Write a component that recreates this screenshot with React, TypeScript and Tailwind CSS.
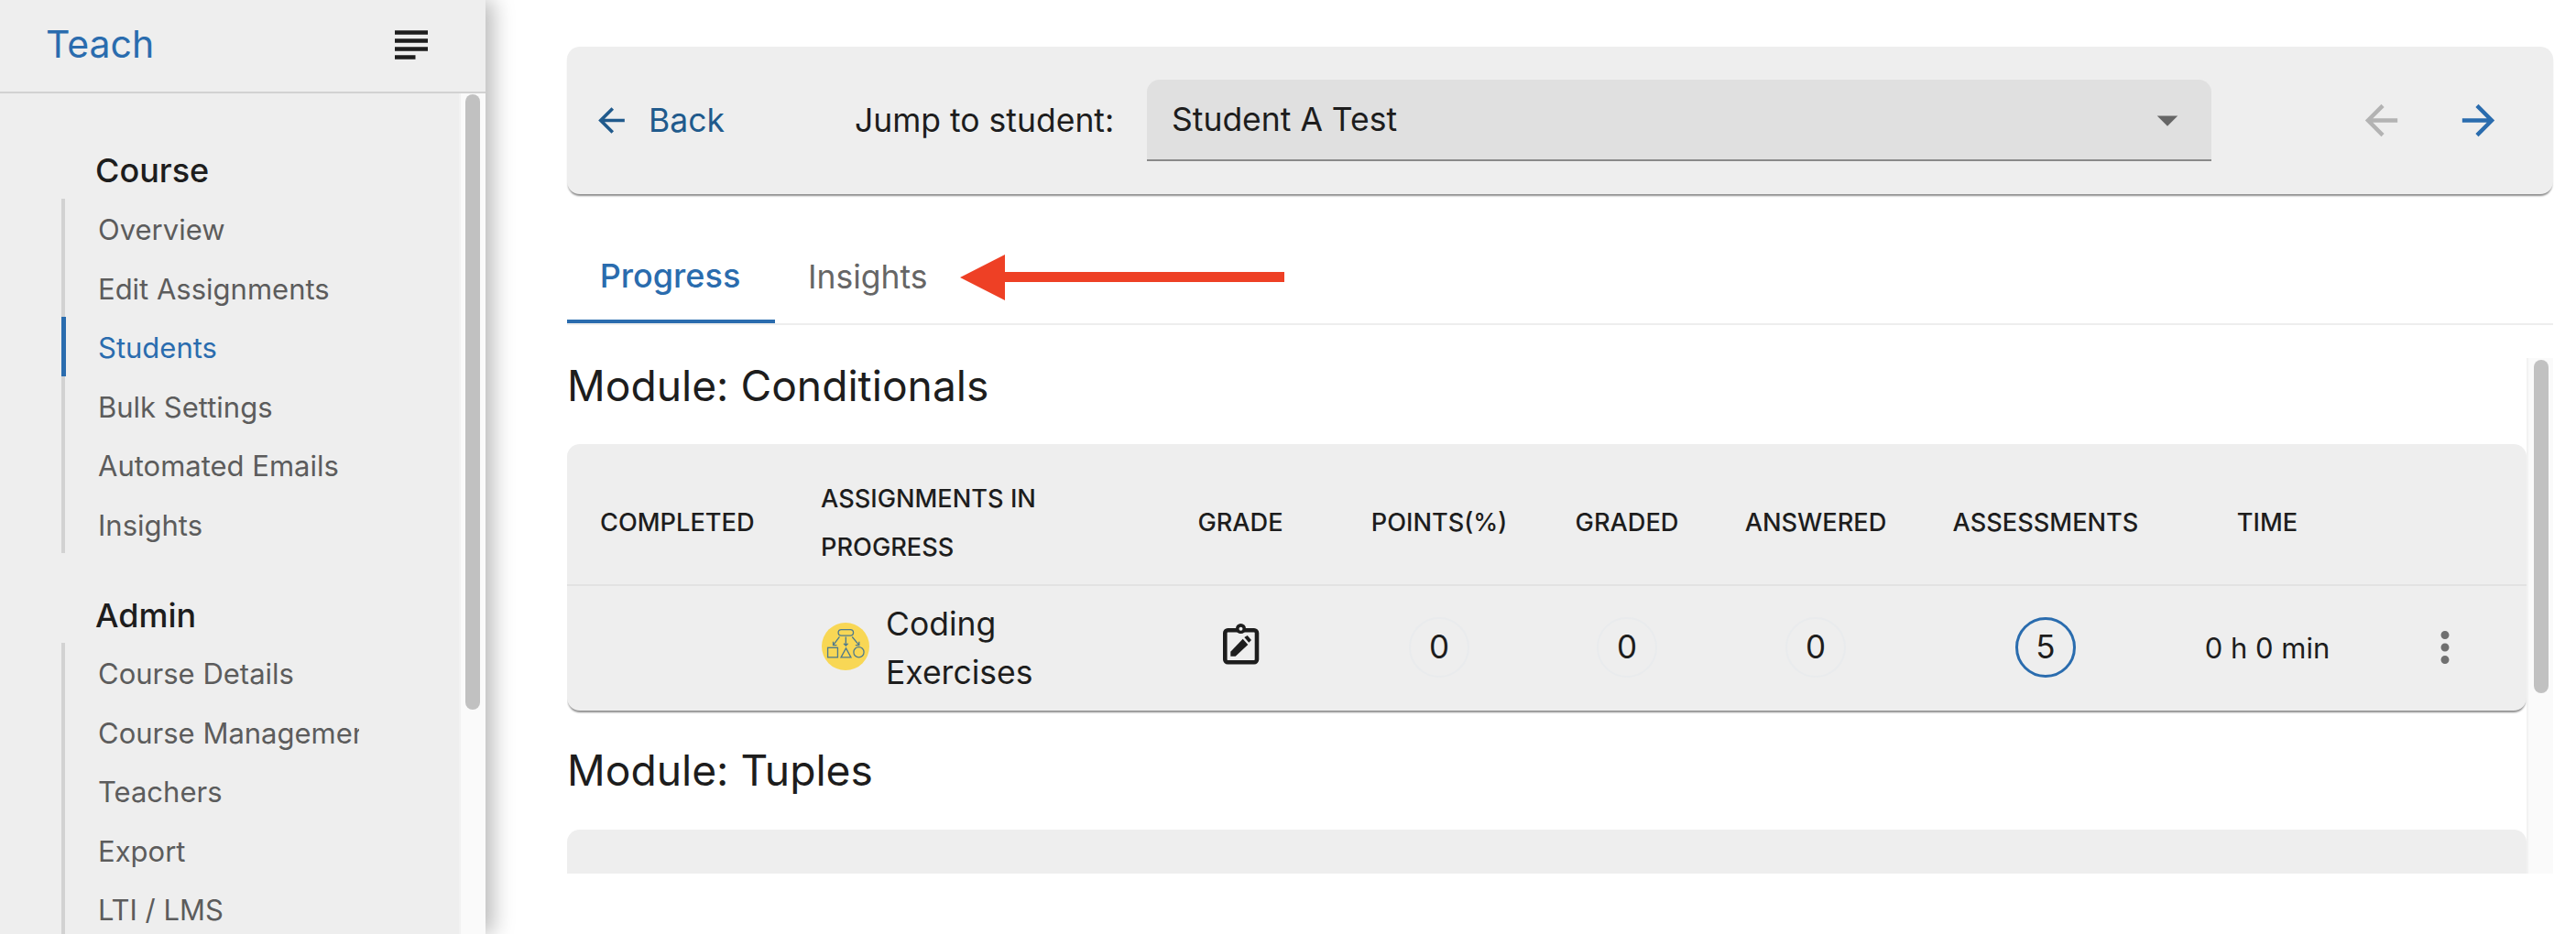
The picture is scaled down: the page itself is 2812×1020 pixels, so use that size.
const courseLinks = ["Overview", "Edit Assignments", "Students", "Bulk Settings", "Automated Emails", "Insights"];
const adminLinks = ["Course Details", "Course Management", "Teachers", "Export", "LTI / LMS"];

const Mui = ({ d, className }: { d: string; className: string }) => (
  <svg viewBox="0 0 24 24" fill="currentColor" className={className}>
    <path d={d} />
  </svg>
);

const back = "M20 11H7.83l5.59-5.59L12 4l-8 8 8 8 1.41-1.41L7.83 13H20v-2z";
const forward = "M12 4l-1.41 1.41L16.17 11H4v2h12.17l-5.58 5.59L12 20l8-8z";

const NavGroup = ({ links }: { links: string[] }) => (
  <div className="w-[325px] border-l-4 border-[#d2d2d2]">
    {links.map((link) => (
      <div
        key={link}
        className={
          link === "Students"
            ? "-ml-[4px] h-[64.5px] w-[325px] overflow-hidden whitespace-nowrap border-l-[5px] border-[#2a6cae] pl-[35px] text-[31px] leading-[67px] text-[#2a6cae]"
            : "h-[64.5px] w-[321px] overflow-hidden whitespace-nowrap pl-[36px] text-[31px] leading-[67px] text-[#5c5c5c]"
        }
      >
        {link}
      </div>
    ))}
  </div>
);

const Sidebar = () => (
  <aside className="relative z-10 flex h-[1020px] w-[530px] shrink-0 flex-col overflow-hidden bg-[#eeeeee] shadow-[8px_0_22px_rgba(0,0,0,0.28)]">
    <div className="flex h-[102px] shrink-0 items-start justify-between border-b-2 border-[#d2d2d2] pl-[50px] pr-[54px]">
      <span className="pt-[20px] text-[41px] leading-[56px] text-[#2a6cae]">Teach</span>
      <Mui d="M14 17H4v2h10v-2zm6-8H4v2h16V9zM4 15h16v-2H4v2zM4 5v2h16V5H4z" className="mt-[22px] h-[54px] w-[54px] text-[#1d1d1d]" />
    </div>
    <div className="flex min-h-0 flex-1">
      <nav className="flex-1 pl-[67px] pt-[60px]">
        <h3 className="mb-[7px] h-[48px] pl-[37px] text-[36px] font-medium leading-[48px] text-[#1d1d1d]">Course</h3>
        <NavGroup links={courseLinks} />
        <h3 className="mb-[6px] mt-[44px] h-[48px] pl-[37px] text-[36px] font-medium leading-[48px] text-[#1d1d1d]">Admin</h3>
        <NavGroup links={adminLinks} />
      </nav>
      <div className="w-[29px] shrink-0 border-l-2 border-[#f2f2f2] bg-[#fafafa] pl-[5px] pt-[1px]">
        <div className="h-[672px] w-[16px] rounded-full bg-[#c1c1c1]" />
      </div>
    </div>
  </aside>
);

const Toolbar = () => (
  <div className="flex h-[161px] items-center rounded-[14px] bg-[#eeeeee] pl-[27px] shadow-[0_3px_2px_-1px_rgba(0,0,0,0.45)]">
    <Mui d={back} className="h-[43px] w-[43px] text-[#205a8c]" />
    <span className="ml-[19px] w-[225px] text-[35.5px] text-[#205a8c]">Back</span>
    <span className="w-[319px] text-[35.5px] text-[#1d1d1d]">Jump to student:</span>
    <div className="flex h-[89px] w-[1162px] items-center justify-between rounded-t-[14px] border-b-2 border-[#8a8a8a] bg-[#e0e0e0] pl-[27px] pr-[21px]">
      <span className="text-[35.5px] text-[#1d1d1d]">Student A Test</span>
      <Mui d="M7 10l5 5 5-5z" className="h-[54px] w-[54px] text-[#666666]" />
    </div>
    <Mui d={back} className="ml-[159px] h-[53px] w-[53px] text-[#b3b3b3]" />
    <Mui d={forward} className="ml-[53px] h-[53px] w-[53px] text-[#2a6cae]" />
  </div>
);

const Tabs = () => (
  <div className="relative mt-[40px] flex h-[103px] border-b-2 border-[#eeeeee]">
    <div className="flex h-[101px] w-[227px] items-center justify-center border-b-4 border-[#2a6cae] pr-[2px] text-[36px] font-medium text-[#2a6cae]">Progress</div>
    <div className="flex h-[101px] items-center px-[36px] text-[35.5px] text-[#666666]">Insights</div>
    <svg viewBox="0 0 354 50" className="absolute left-[429px] top-[26px] h-[50px] w-[354px]">
      <path d="M0 25 L49 0 V19 H354 V30 H49 V50 Z" fill="#ee4025" />
    </svg>
  </div>
);

const colClass = "grid grid-cols-[242px_381px_224px_210px_200px_212px_290px_194px_185px]";

const Counter = ({ value, active }: { value: number; active?: boolean }) => (
  <div className="mb-[3px] flex justify-center">
    <span
      className={
        active
          ? "flex h-[66px] w-[66px] items-center justify-center rounded-full border-[3px] border-[#2a6cae] text-[35px] text-[#1d1d1d]"
          : "flex h-[66px] w-[66px] items-center justify-center rounded-full border-2 border-[#e9ebed] text-[35px] text-[#1d1d1d]"
      }
    >
      {value}
    </span>
  </div>
);

const GradeIcon = () => (
  <svg viewBox="0 0 50 50" className="mb-[10px] ml-[2px] h-[50px] w-[50px] text-[#1d1d1d]">
    <rect x="7.3" y="10.3" width="34.7" height="35" rx="3" fill="none" stroke="currentColor" strokeWidth="4.6" />
    <circle cx="24.5" cy="8.5" r="5.5" fill="currentColor" />
    <circle cx="24.5" cy="8.7" r="2" fill="#eeeeee" />
    <path d="M13.3 38.7 V33.7 L26.7 19.7 L32.3 26 L18.7 38.7 Z" fill="currentColor" />
    <path d="M28.3 18 L31.7 16 L36 21 L33.3 23.7 Z" fill="currentColor" />
  </svg>
);

const CodingIcon = () => (
  <svg viewBox="49 57 158 158" className="mb-[5px] h-[52px] w-[52px] shrink-0 rounded-full bg-[#f8d755]" fill="none" stroke="#4f7a8c" strokeWidth="4">
    <rect x="104" y="80" width="50" height="20" rx="10" />
    <path d="M108 104 L87 132 M87 120 V132 H99" />
    <path d="M129 104 V133 M122 126 L129 133 L136 126" />
    <path d="M150 104 L173 132 M173 120 V132 H161" />
    <rect x="69" y="140" width="33" height="32" />
    <path d="M113 172 H146 L129.5 142 Z" />
    <circle cx="172" cy="155" r="17" />
  </svg>
);

const ModuleTable = () => (
  <div className="h-[291px] rounded-[14px] bg-[#eeeeee] shadow-[0_3px_2px_-1px_rgba(0,0,0,0.45)]">
    <div className={`${colClass} h-[155px] items-center border-b-2 border-[#e2e2e2] pt-[18px] text-center text-[27.2px] font-medium leading-[53px] text-[#1d1d1d]`}>
      <div className="pl-[36px] text-left">COMPLETED</div>
      <div className="pl-[35px] text-left">ASSIGNMENTS IN PROGRESS</div>
      <div>GRADE</div>
      <div>POINTS(%)</div>
      <div>GRADED</div>
      <div>ANSWERED</div>
      <div>ASSESSMENTS</div>
      <div>TIME</div>
      <div />
    </div>
    <div className={`${colClass} h-[136px] items-center text-center text-[#1d1d1d]`}>
      <div />
      <div className="flex items-center gap-[18px] pl-[36px] text-left text-[35.5px] leading-[53px]">
        <CodingIcon />
        <span className="w-[180px]">Coding Exercises</span>
      </div>
      <div className="flex justify-center"><GradeIcon /></div>
      <Counter value={0} />
      <Counter value={0} />
      <Counter value={0} />
      <Counter value={5} active />
      <div className="text-[31px]">0 h 0 min</div>
      <div className="mb-[3px] flex justify-center pl-[8px]">
        <Mui d="M12 8c1.1 0 2-.9 2-2s-.9-2-2-2-2 .9-2 2 .9 2 2 2zm0 2c-1.1 0-2 .9-2 2s.9 2 2 2 2-.9 2-2-.9-2-2-2zm0 6c-1.1 0-2 .9-2 2s.9 2 2 2 2-.9 2-2-.9-2-2-2z" className="h-[54px] w-[54px] text-[#707070]" />
      </div>
    </div>
  </div>
);

export default function App() {
  return (
    <div className="flex h-[1020px] w-[2812px] overflow-hidden bg-white font-['Inter',sans-serif]">
      <Sidebar />
      <main className="min-w-0 flex-1 pl-[89px] pr-[25px] pt-[51px]">
        <Toolbar />
        <Tabs />
        <div className="mt-[36px] flex h-[563px] overflow-hidden">
          <div className="min-w-0 flex-1">
            <h2 className="h-[60px] text-[46.2px] font-normal leading-[60px] text-[#1d1d1d]">Module: Conditionals</h2>
            <div className="mt-[34px]"><ModuleTable /></div>
            <h2 className="mt-[35px] h-[60px] text-[46.2px] font-normal leading-[60px] text-[#1d1d1d]">Module: Tuples</h2>
            <div className="mt-[35px] h-[291px] rounded-[14px] bg-[#eeeeee]" />
          </div>
          <div className="w-[29px] shrink-0 border-l-2 border-[#f2f2f2] bg-[#fafafa] pl-[6px] pt-[2px]">
            <div className="h-[364px] w-[16px] rounded-full bg-[#c1c1c1]" />
          </div>
        </div>
      </main>
    </div>
  );
}
